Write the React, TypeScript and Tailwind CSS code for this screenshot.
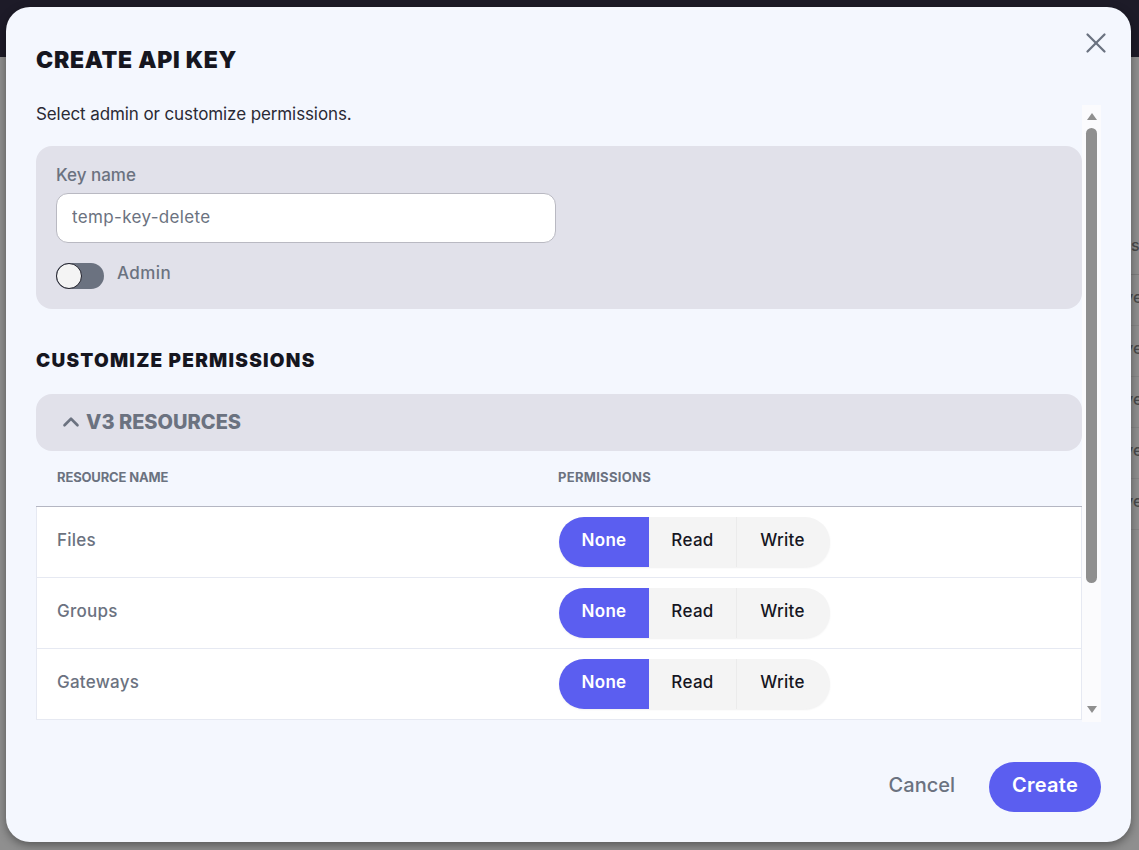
import { ChevronUp, X } from 'lucide-react';

const font = "font-['Inter','Liberation_Sans',sans-serif]";

const resources = ['Files', 'Groups', 'Gateways'];

function PermissionToggle() {
  return (
    <div className="flex h-[50px] w-[271px] rounded-full bg-[#f4f4f4] text-[17px] font-medium tracking-[0.3px] shadow-[0_1px_2px_rgba(0,0,0,0.06)]">
      <button className="flex w-[90px] items-center justify-center rounded-l-full bg-[#5b5ef0] pb-[3px] font-semibold text-white">
        None
      </button>
      <button className="flex w-[88px] items-center justify-center border-r border-[#ebebeb] pb-[3px] text-[#16161f]">
        Read
      </button>
      <button className="flex flex-1 items-center justify-center pr-[2px] pb-[3px] text-[#16161f]">
        Write
      </button>
    </div>
  );
}

function ResourceRow({ name }: { name: string }) {
  return (
    <div className="flex h-[71px] border-b border-[#e6e9f2]">
      <div className="w-[522px] pt-[21px] pl-5 text-[17px] leading-[24px] font-medium tracking-[0.25px] text-[#6b7280]">
        {name}
      </div>
      <div className="pt-[10px]">
        <PermissionToggle />
      </div>
    </div>
  );
}

function Scrollbar() {
  return (
    <div className="flex w-[19px] shrink-0 flex-col items-center bg-[#fbfbfd]">
      <div className="mt-[8px] h-0 w-0 border-x-[5px] border-b-[7px] border-x-transparent border-b-[#8f8f8f]" />
      <div className="mt-[8px] h-[455px] w-[11px] rounded-full bg-[#8f8f8f]" />
      <div className="mt-auto mb-[9px] h-0 w-0 border-x-[5px] border-t-[7px] border-x-transparent border-t-[#8f8f8f]" />
    </div>
  );
}

function BackdropRow() {
  return (
    <div className="h-[51px] border-b border-[#858585] pt-[10px] text-[16px] leading-[24px] font-medium text-[#4a4a4a]">
      <span className="ml-[-7px] block">ve</span>
    </div>
  );
}

export default function App() {
  return (
    <div className={`relative h-[850px] w-[1139px] overflow-hidden bg-[#8f8f8f] ${font}`}>
      <div className="h-[57px] bg-[#1d1b28]" />
      <div className="ml-[1131px] w-[8px] overflow-hidden">
        <div className="h-[218px] border-b border-[#7d7d7d] pt-[176px] text-[16px] leading-[24px] font-medium text-[#4a4a4a]">
          s
        </div>
        <BackdropRow />
        <BackdropRow />
        <BackdropRow />
        <BackdropRow />
        <BackdropRow />
      </div>

      <div className="absolute top-[7px] left-[6px] flex h-[835px] w-[1125px] flex-col rounded-[24px] bg-[#f4f7fe] shadow-[0_3px_10px_rgba(0,0,0,0.4)]">
        <button className="absolute top-[19px] right-[18px] text-[#6b7280]">
          <X size={34} strokeWidth={1.6} />
        </button>

        <h2 className="mt-[40px] ml-[30px] text-[23px] leading-[26px] font-black tracking-[0.7px] text-[#16161f]">
          CREATE API KEY
        </h2>

        <div className="mt-[32px] ml-[30px] flex h-[617px] w-[1065px] overflow-hidden">
          <div className="w-[1046px] shrink-0">
            <p className="pt-[1px] text-[17px] leading-[16px] tracking-[-0.1px] text-[#2a2a35]">
              Select admin or customize permissions.
            </p>

            <div className="mt-[24px] h-[163px] rounded-[16px] bg-[#e1e1ea] px-5 pt-[19px]">
              <label className="block text-[17px] leading-[20px] font-medium text-[#6b7280]">
                Key name
              </label>
              <input
                readOnly
                value="temp-key-delete"
                className="mt-[8px] block h-[50px] w-[500px] rounded-[12px] border border-[#b9b9c2] bg-white px-[15px] pb-[3px] text-[17px] tracking-[0.35px] text-[#6b7280] outline-none"
              />
              <div className="mt-[20px] flex items-center gap-[13px]">
                <div className="flex h-[26px] w-[48px] items-center rounded-full bg-[#6b7280]">
                  <div className="h-[26px] w-[26px] rounded-full border border-[#1f1f2a] bg-[#f4f4f4]" />
                </div>
                <span className="-mt-[5px] text-[17px] font-medium tracking-[0.4px] text-[#6b7280]">
                  Admin
                </span>
              </div>
            </div>

            <h3 className="mt-[41px] text-[19px] leading-[22px] font-black tracking-[1.25px] text-[#16161f]">
              CUSTOMIZE PERMISSIONS
            </h3>

            <div className="mt-[22px] flex h-[57px] items-center rounded-[16px] bg-[#e1e1ea] pb-[2px] pl-[22px] text-[20px] font-extrabold text-[#6b7280]">
              <ChevronUp size={26} strokeWidth={2.4} className="mr-[2px]" />
              V3 RESOURCES
            </div>

            <div className="flex h-[56px] items-center border-b border-[#b4b6c2] pb-[2px] text-[13px] font-bold text-[#6b7280]">
              <div className="w-[522px] pl-[21px] tracking-[-0.15px]">RESOURCE NAME</div>
              <div className="tracking-[0.3px]">PERMISSIONS</div>
            </div>

            <div className="border-x border-[#e6e9f2] bg-white">
              {resources.map((name) => (
                <ResourceRow key={name} name={name} />
              ))}
            </div>
          </div>
          <Scrollbar />
        </div>

        <div className="mt-auto mb-[30px] flex items-center justify-end pr-[30px]">
          <button className="mr-[34px] mb-[4px] text-[20px] font-medium text-[#6b7280]">
            Cancel
          </button>
          <button className="h-[50px] w-[112px] rounded-full bg-[#5b5ef0] pb-[5px] text-[20px] font-semibold tracking-[0.3px] text-white">
            Create
          </button>
        </div>
      </div>
    </div>
  );
}
